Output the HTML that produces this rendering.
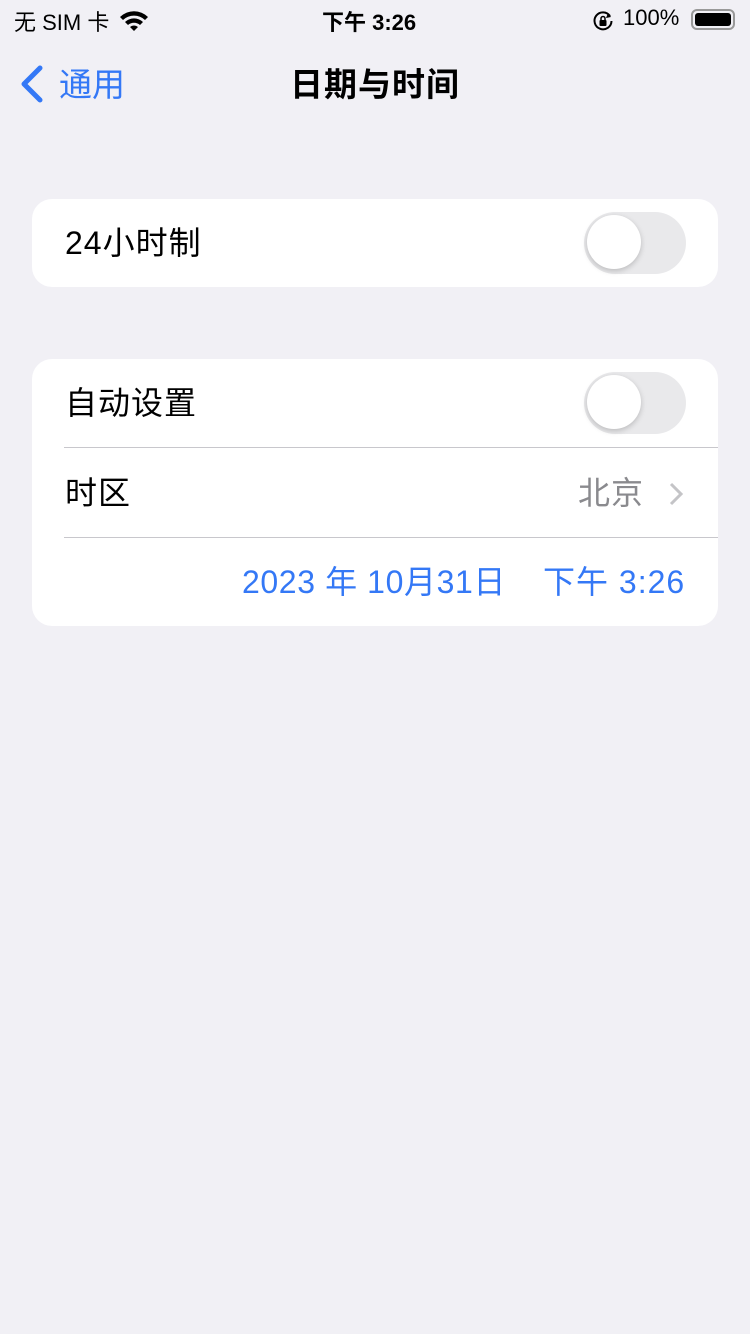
<!DOCTYPE html>
<html><head><meta charset="utf-8"><style>
body{margin:0;width:750px;height:1334px;background:#f1f0f5;font-family:"Liberation Sans","Noto Sans CJK SC",sans-serif;position:relative;overflow:hidden}
.a{position:absolute;white-space:nowrap}
.card{position:absolute;left:32px;width:686px;background:#fff;border-radius:20px}
.tog{position:absolute;width:102px;height:62px;border-radius:31px;background:#e9e9eb;left:584px}
.tog::after{content:"";position:absolute;left:3px;top:3px;width:54px;height:54px;border-radius:50%;background:#fff;box-shadow:0 2px 6px rgba(0,0,0,.2)}
.sep{position:absolute;left:64px;right:32px;height:1px;background:#c8c7cc}
</style></head><body>
<div class="a" style="left:14px;top:5px;font-size:22px">无 SIM 卡</div>
<svg class="a" style="left:118px;top:9px" width="32" height="22" viewBox="0 0 32 22"><path d="M2 8a20 20 0 0 1 28 0l-3 3a16 16 0 0 0-22 0z M7 13a13 13 0 0 1 18 0l-3 3a9 9 0 0 0-12 0z M12 18a6 6 0 0 1 8 0l-4 4z" fill="#000"/></svg>
<div class="a" style="left:322px;top:5px;font-size:22px;font-weight:bold">下午 3:26</div>
<svg class="a" style="left:592px;top:10px" width="22" height="22" viewBox="0 0 22 22"><path d="M18 6A8.5 8.5 0 1 0 19.5 11" stroke="#000" stroke-width="2" fill="none"/><path d="M16 3l3 4-5 1z" fill="#000"/><rect x="7.5" y="10" width="7" height="6" rx="1"/><path d="M9 10V8.5a2 2 0 0 1 4 0V10" stroke="#000" stroke-width="1.5" fill="none"/></svg>
<div class="a" style="left:623px;top:5px;font-size:22px">100%</div>
<div class="a" style="left:691px;top:9px;width:44px;height:21px;border:2px solid #999;border-radius:6px;box-sizing:border-box"><div style="margin:2px;height:13px;background:#000;border-radius:3px"></div></div>
<svg class="a" style="left:18px;top:64px" width="26" height="40" viewBox="0 0 26 40"><path d="M22 4L6 20l16 16" stroke="#3478f6" stroke-width="5" fill="none" stroke-linecap="round" stroke-linejoin="round"/></svg>
<div class="a" style="left:59px;top:58px;font-size:33px;color:#3478f6">通用</div>
<div class="a" style="left:290px;top:58px;font-size:33px;font-weight:bold;letter-spacing:1px">日期与时间</div>
<div class="card" style="top:199px;height:88px"></div>
<div class="a" style="left:65px;top:218px;font-size:32px;letter-spacing:1px">24小时制</div>
<div class="tog" style="top:212px"></div>
<div class="card" style="top:359px;height:267px"></div>
<div class="a" style="left:65px;top:378px;font-size:32px;letter-spacing:1px">自动设置</div>
<div class="tog" style="top:372px"></div>
<div class="sep" style="top:447px"></div>
<div class="a" style="left:65px;top:468px;font-size:32px;letter-spacing:1px">时区</div>
<div class="a" style="left:578px;top:468px;font-size:32px;color:#8a8a8e;letter-spacing:1px">北京</div>
<svg class="a" style="left:668px;top:481px" width="16" height="26" viewBox="0 0 16 26"><path d="M3 3l10 10-10 10" stroke="#c4c4c7" stroke-width="3" fill="none"/></svg>
<div class="sep" style="top:537px"></div>
<div class="a" style="left:242px;top:557px;font-size:32px;color:#3478f6;letter-spacing:0.6px">2023 年 10月31日</div>
<div class="a" style="left:543px;top:557px;font-size:32px;color:#3478f6;letter-spacing:1px">下午 3:26</div>
</body></html>
